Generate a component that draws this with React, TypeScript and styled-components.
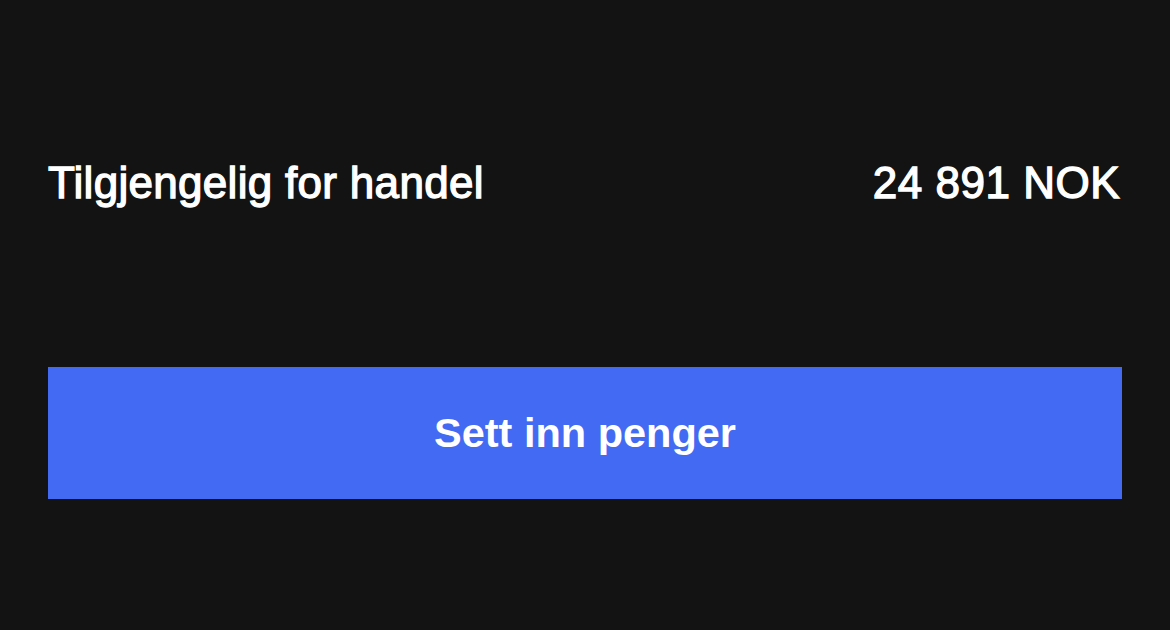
import * as React from 'react';

import styled, { createGlobalStyle } from 'styled-components';

const GlobalStyle = createGlobalStyle`
  html, body {
    margin: 0;
    padding: 0;
    background: #131313;
  }
  body {
    font-family: "Liberation Sans", Arial, sans-serif;
  }
`;

const App = (): JSX.Element => {
  return (
    <>
      <GlobalStyle />
      <Page>
        <BalanceRow>
          <Label>Tilgjengelig for handel</Label>
          <Amount>24 891 NOK</Amount>
        </BalanceRow>
        <DepositButton type="button">Sett inn penger</DepositButton>
      </Page>
    </>
  );
};

const Page = styled.div`
  width: 1170px;
  height: 630px;
  box-sizing: border-box;
  padding: 150px 48px 0;
  display: flex;
  flex-direction: column;
  gap: 151px;
  background: #131313;
`;
const BalanceRow = styled.div`
  display: flex;
  justify-content: space-between;
  align-items: center;
  height: 66px;
  padding-right: 2px;
`;
const Label = styled.span`
  color: #ffffff;
  font-size: 44px;
  line-height: 50px;
  font-weight: 400;
  letter-spacing: 0.3px;
  -webkit-text-stroke: 1.3px #ffffff;
`;
const Amount = styled(Label)`
  letter-spacing: 0.5px;
`;
const DepositButton = styled.button`
  display: flex;
  align-items: center;
  justify-content: center;
  height: 132px;
  width: 100%;
  padding: 0;
  border: none;
  border-radius: 0;
  background: #436af2;
  color: #ffffff;
  font-family: inherit;
  font-size: 41.5px;
  line-height: 48px;
  font-weight: 700;
  cursor: pointer;
`;

export default App;
